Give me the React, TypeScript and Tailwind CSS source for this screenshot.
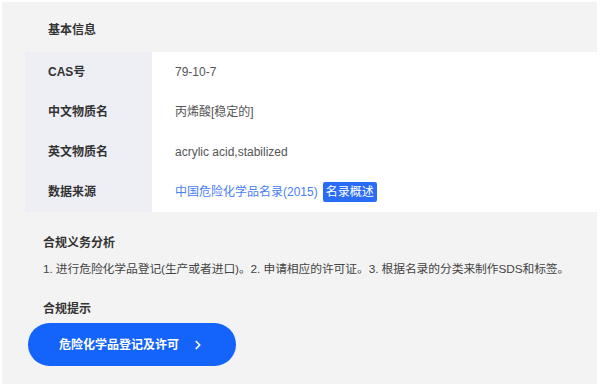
import { ChevronRight } from 'lucide-react';

const rows = [
  { label: 'CAS号', value: '79-10-7' },
  { label: '中文物质名', value: '丙烯酸[稳定的]' },
  { label: '英文物质名', value: 'acrylic acid,stabilized' },
];

export default function App() {
  return (
    <div
      className="w-[600px] h-[386px] bg-white p-[2px] pr-[3px]"
      style={{ fontFamily: '"Liberation Sans", "Noto Sans CJK SC", sans-serif' }}
    >
      <div className="h-full bg-[#f3f3f3] pt-[20px]">
        <h2 className="pl-[46px] text-[12px] font-bold text-[#333] leading-[16px]">基本信息</h2>

        <div className="ml-[23px] mt-[14px] flex">
          <div className="w-[127px] bg-[#eeeff4]">
            {[...rows.map((r) => r.label), '数据来源'].map((l) => (
              <div key={l} className="h-[40px] flex items-center pl-[23px] text-[12px] font-bold text-[#333]">
                {l}
              </div>
            ))}
          </div>
          <div className="flex-1 bg-white">
            {rows.map((r) => (
              <div key={r.label} className="h-[40px] flex items-center pl-[23px] text-[12px] text-[#555]">
                {r.value}
              </div>
            ))}
            <div className="h-[39px] flex items-center pl-[23px] text-[12px]">
              <span className="text-[#4a80f5]">中国危险化学品名录(2015)</span>
              <span className="ml-[5px] px-[3px] h-[20px] flex items-center rounded-[2px] bg-[#2a6cf6] text-white">
                名录概述
              </span>
            </div>
          </div>
        </div>

        <div className="pl-[41px] mt-[23px]">
          <h3 className="text-[12px] font-bold text-[#333] leading-[16px]">合规义务分析</h3>
          <p className="mt-[10px] text-[11.8px] tracking-[-0.1px] text-[#444] leading-[16px]">
            1. 进行危险化学品登记(生产或者进口)。2. 申请相应的许可证。3. 根据名录的分类来制作SDS和标签。
          </p>
          <h3 className="mt-[24px] text-[12px] font-bold text-[#333] leading-[16px]">合规提示</h3>
        </div>

        <button className="ml-[26px] mt-[6px] w-[208px] h-[43px] rounded-full bg-[#1463fb] text-white text-[12px] font-bold flex items-center justify-center gap-[12px]">
          危险化学品登记及许可
          <ChevronRight size={14} strokeWidth={3} />
        </button>
      </div>
    </div>
  );
}
